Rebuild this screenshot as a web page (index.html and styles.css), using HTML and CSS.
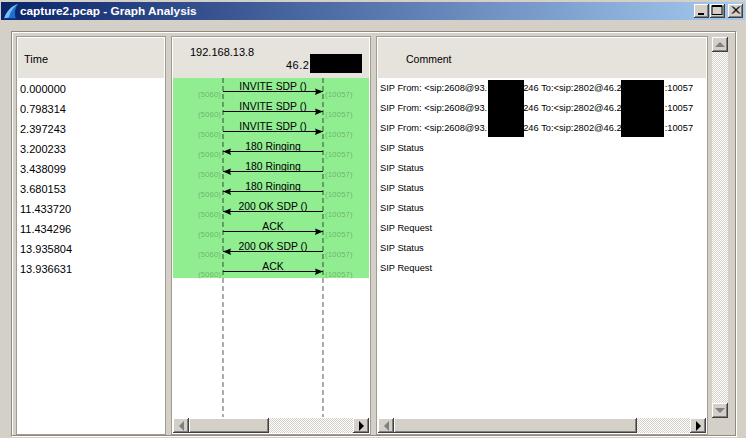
FILE: index.html
```html
<!DOCTYPE html>
<html>
<head>
<meta charset="utf-8">
<title>capture2.pcap - Graph Analysis</title>
<link rel="stylesheet" href="styles.css">
</head>
<body>
<div class="window">
  <div class="titlebar">
    <svg class="app-icon" width="17" height="17" viewBox="0 0 17 17">
      <path d="M1 16 C3 9 8 3 15 1 C12 5 11 10 13 16 Z" fill="#1f6fd0"/>
      <path d="M1 16 C3 9 8 3 15 1 C11 4 7 9 6 14 Z" fill="#7cc0f2"/>
      <path d="M1 15 H14 V16 H1 Z" fill="#0b3f8f"/>
    </svg>
    <span class="title-text">capture2.pcap - Graph Analysis</span>
    <div class="caption-buttons">
      <div class="cap-btn"><svg width="15" height="13" viewBox="0 0 15 13"><rect x="4" y="9" width="6" height="2"/></svg></div>
      <div class="cap-btn cap-max"><svg width="14" height="13" viewBox="0 0 14 13"><path d="M2 1.500H12M2 1.500V11M12 1.500V11M2 2.500H12M2 10.500H12" fill="none" stroke="#000"/></svg></div>
      <div class="cap-btn cap-close"><svg width="15" height="13" viewBox="0 0 15 13"><path d="M4 2.500L11 9.500M5 2.500L12 9.500M11 2.500L4 9.500M12 2.500L5 9.500" fill="none" stroke="#000"/></svg></div>
    </div>
  </div>

  <div class="frame">
    <section class="panel panel-time">
      <header class="head head-time">Time</header>
      <div class="rows time-rows">
        <div class="row">0.000000</div>
        <div class="row">0.798314</div>
        <div class="row">2.397243</div>
        <div class="row">3.200233</div>
        <div class="row">3.438099</div>
        <div class="row">3.680153</div>
        <div class="row">11.433720</div>
        <div class="row">11.434296</div>
        <div class="row">13.935804</div>
        <div class="row">13.936631</div>
      </div>
    </section>

    <section class="panel panel-graph">
      <header class="head head-graph">
        <div class="ip ip-a">192.168.13.8</div>
        <div class="ip ip-b">46.2</div>
        <div class="mask mask-ip"></div>
      </header>
      <svg class="graph" width="196" height="339" viewBox="173 78 196 339">
        <rect x="173" y="78" width="196" height="200" fill="#90ee90"/>
        <path class="lifeline" d="M223 78V417M323 78V417"/>
        <g class="msg">
          <path d="M223 91.500H323"/><path class="head-r" d="M323 91.500L315 88.500L316 91.500L315 95Z"/>
          <path d="M223 111.500H323"/><path class="head-r" d="M323 111.500L315 108.500L316 111.500L315 115Z"/>
          <path d="M223 131.500H323"/><path class="head-r" d="M323 131.500L315 128.500L316 131.500L315 135Z"/>
          <path d="M223 151.500H323"/><path class="head-r" d="M223 151.500L231 148.500L230 151.500L231 155Z"/>
          <path d="M223 171.500H323"/><path class="head-r" d="M223 171.500L231 168.500L230 171.500L231 175Z"/>
          <path d="M223 191.500H323"/><path class="head-r" d="M223 191.500L231 188.500L230 191.500L231 195Z"/>
          <path d="M223 211.500H323"/><path class="head-r" d="M223 211.500L231 208.500L230 211.500L231 215Z"/>
          <path d="M223 231.500H323"/><path class="head-r" d="M323 231.500L315 228.500L316 231.500L315 235Z"/>
          <path d="M223 251.500H323"/><path class="head-r" d="M223 251.500L231 248.500L230 251.500L231 255Z"/>
          <path d="M223 271.500H323"/><path class="head-r" d="M323 271.500L315 268.500L316 271.500L315 275Z"/>
        </g>
        <g class="labels">
          <text x="273" y="90">INVITE SDP ()</text>
          <text x="273" y="110">INVITE SDP ()</text>
          <text x="273" y="130">INVITE SDP ()</text>
          <text x="273" y="150">180 Ringing</text>
          <text x="273" y="170">180 Ringing</text>
          <text x="273" y="190">180 Ringing</text>
          <text x="273" y="210">200 OK SDP ()</text>
          <text x="273" y="230">ACK</text>
          <text x="273" y="250">200 OK SDP ()</text>
          <text x="273" y="270">ACK</text>
        </g>
        <g class="ports ports-l">
          <text x="221" y="97">(5060)</text><text x="221" y="117">(5060)</text><text x="221" y="137">(5060)</text><text x="221" y="157">(5060)</text><text x="221" y="177">(5060)</text><text x="221" y="197">(5060)</text><text x="221" y="217">(5060)</text><text x="221" y="237">(5060)</text><text x="221" y="257">(5060)</text><text x="221" y="277">(5060)</text>
        </g>
        <g class="ports ports-r">
          <text x="325" y="97">(10057)</text><text x="325" y="117">(10057)</text><text x="325" y="137">(10057)</text><text x="325" y="157">(10057)</text><text x="325" y="177">(10057)</text><text x="325" y="197">(10057)</text><text x="325" y="217">(10057)</text><text x="325" y="237">(10057)</text><text x="325" y="257">(10057)</text><text x="325" y="277">(10057)</text>
        </g>
      </svg>
      <div class="hscroll">
        <div class="sb-btn"><span class="tri tri-left"></span></div>
        <div class="thumb thumb-graph"></div>
        <div class="track"></div>
        <div class="sb-btn"><span class="tri tri-right"></span></div>
      </div>
    </section>

    <section class="panel panel-comment">
      <header class="head head-comment">Comment</header>
      <div class="rows comment-rows">
        <div class="row">SIP From: &lt;sip:2608@93.<span class="gap gap-a"></span>246 To:&lt;sip:2802@46.2<span class="gap gap-b"></span>:10057</div>
        <div class="row">SIP From: &lt;sip:2608@93.<span class="gap gap-a"></span>246 To:&lt;sip:2802@46.2<span class="gap gap-b"></span>:10057</div>
        <div class="row">SIP From: &lt;sip:2608@93.<span class="gap gap-a"></span>246 To:&lt;sip:2802@46.2<span class="gap gap-b"></span>:10057</div>
        <div class="row">SIP Status</div>
        <div class="row">SIP Status</div>
        <div class="row">SIP Status</div>
        <div class="row">SIP Status</div>
        <div class="row">SIP Request</div>
        <div class="row">SIP Status</div>
        <div class="row">SIP Request</div>
        <div class="mask mask-c1"></div>
        <div class="mask mask-c2"></div>
      </div>
      <div class="hscroll">
        <div class="sb-btn"><span class="tri tri-left"></span></div>
        <div class="thumb thumb-comment"></div>
        <div class="track"></div>
        <div class="sb-btn"><span class="tri tri-right"></span></div>
      </div>
    </section>

    <div class="vscroll">
      <div class="sb-btn"><span class="tri tri-up"></span></div>
      <div class="track"></div>
      <div class="sb-btn"><span class="tri tri-down"></span></div>
    </div>
  </div>
</div>
</body>
</html>
```
FILE: styles.css
```css
* { box-sizing: border-box; }
html, body { margin: 0; padding: 0; }
body {
  width: 746px;
  height: 438px;
  overflow: hidden;
  background: #d4d0c8;
  font-family: "Liberation Sans", Arial, sans-serif;
  font-size: 11px;
  color: #000;
}
.window {
  width: 746px;
  height: 438px;
  display: flex;
  flex-direction: column;
  padding: 2px 1px 0;
}
.titlebar {
  height: 18px;
  flex: none;
  display: flex;
  align-items: center;
  padding: 0 2px 0 2px;
  background: linear-gradient(90deg, #0a246a 0%, #a6caf0 100%);
}
.app-icon { flex: none; }
.title-text {
  color: #fff;
  font-weight: 700;
  font-size: 11.800px;
  flex: 1;
  white-space: nowrap;
}
.caption-buttons { display: flex; }
.cap-btn {
  width: 15px;
  height: 14px;
  margin-right: 2px;
  background: #d4d0c8;
  box-shadow: inset -1px -1px #404040, inset 1px 1px #fff, inset -2px -2px #808080;
  line-height: 0;
}
.cap-btn:first-child { margin-right: 1px; }
.cap-btn:last-child { margin-right: 0; margin-left: 1px; }

.frame {
  flex: none;
  width: 725px;
  height: 405px;
  margin: 11px 0 0 10px;
  padding: 4px;
  display: flex;
  align-items: flex-start;
  gap: 5px;
  border: 1px solid #8f8b82;
  box-shadow: 1px 1px #fff, inset 1px 1px #fff;
}
.panel {
  height: 399px;
  display: flex;
  flex-direction: column;
  background: #fff;
  border: 1px solid #a09c90;
  padding: 1px;
  position: relative;
  flex: none;
}
.panel-time { width: 150px; }
.panel-graph { width: 200px; }
.panel-comment { width: 332px; margin-right: -1px; }
.head {
  height: 40px;
  flex: none;
  background: #e6e2dc;
  position: relative;
}
.head-time { padding: 15px 0 0 6px; line-height: 13px; }
.head-comment { padding: 15px 0 0 28px; line-height: 13px; font-size: 10.500px; }
.ip { line-height: 13px; white-space: nowrap; }
.ip-a { padding: 8px 0 0 17px; }
.ip-b { padding: 0 0 0 113px; letter-spacing: .5px; }
.mask { position: absolute; background: #000; }
.mask-ip { left: 137px; top: 16px; width: 52px; height: 19px; }
.mask-c1 { left: 110px; top: 2px; width: 36px; height: 57px; }
.mask-c2 { left: 243px; top: 2px; width: 43px; height: 57px; }
.rows { position: relative; flex: 1; min-height: 0; }
.time-rows { padding: 1px 0 0 2px; }
.comment-rows { padding: 0 0 0 2px; font-size: 9.300px; }
.row { height: 20px; line-height: 20px; white-space: nowrap; }
.gap { display: inline-block; }
.gap-a { width: 36px; }
.gap-b { width: 43px; }

.graph { display: block; flex: none; }
.lifeline { fill: none; stroke: rgba(0,0,0,.33); stroke-width: 2; stroke-dasharray: 5 3; }
.msg path { fill: none; stroke: #000; stroke-width: 1; }
.msg .head-r { fill: #000; stroke: none; }
.labels text { font-size: 10.400px; text-anchor: middle; }
.ports text { font-size: 8px; fill: #000; fill-opacity: .28; }
.ports-l text { text-anchor: end; }

.hscroll {
  height: 16px;
  flex: none;
  display: flex;
  background: #fff;
  padding-top: 1px;
}
.sb-btn {
  width: 16px;
  height: 15px;
  flex: none;
  background: #d4d0c8;
  box-shadow: inset -1px -1px #404040, inset 1px 1px #fff, inset -2px -2px #808080;
  display: flex;
  align-items: center;
  justify-content: center;
}
.thumb {
  height: 15px;
  flex: none;
  background: #d4d0c8;
  box-shadow: inset -1px -1px #404040, inset 1px 1px #fff, inset -2px -2px #808080;
}
.thumb-graph { width: 80px; }
.thumb-comment { width: 243px; }
.track {
  flex: 1;
  background-color: #fff;
  background-image: conic-gradient(#d4d0c8 25%, #fff 0 50%, #d4d0c8 0 75%, #fff 0);
  background-size: 2px 2px;
}
.tri { width: 0; height: 0; display: block; border-style: solid; border-color: transparent; }
.tri-left { border-width: 5px 5px 5px 0; border-right-color: #808080; }
.tri-right { border-width: 5px 0 5px 5px; border-left-color: #000; }
.tri-up { border-width: 0 5px 5px; border-bottom-color: #808080; }
.tri-down { border-width: 5px 5px 0; border-top-color: #808080; }

.vscroll {
  width: 16px;
  height: 381px;
  margin-top: 1px;
  flex: none;
  display: flex;
  flex-direction: column;
}
```
